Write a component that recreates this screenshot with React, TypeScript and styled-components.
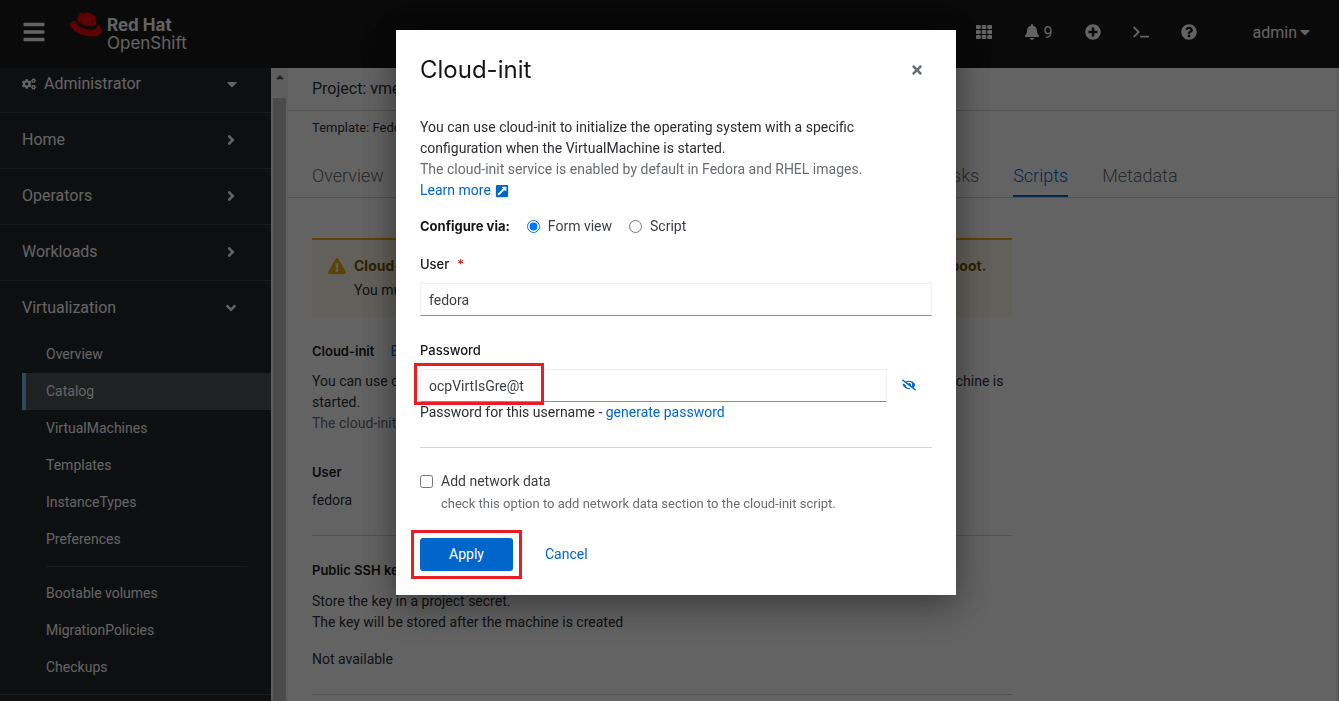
import React, { useState } from 'react';
import styled, { createGlobalStyle } from 'styled-components';
import {
  FaAngleDown,
  FaAngleRight,
  FaBars,
  FaBell,
  FaCaretDown,
  FaCaretUp,
  FaCogs,
  FaExclamationTriangle,
  FaExternalLinkSquareAlt,
  FaEyeSlash,
  FaPlusCircle,
  FaQuestionCircle,
  FaTh,
  FaTimes,
} from 'react-icons/fa';

const text = `Roboto, 'Liberation Sans', sans-serif`;
const display = `Inter, 'Liberation Sans', sans-serif`;

const GlobalStyle = createGlobalStyle`
  *, *::before, *::after { box-sizing: border-box; }
  body {
    margin: 0;
    background: #fff;
    color: #2b2d30;
    font-family: ${text};
    font-size: 14px;
    line-height: 21px;
  }
  button { font: inherit; color: inherit; background: none; border: 0; padding: 0; cursor: pointer; }
  a { color: #0066cc; text-decoration: none; }
  p, h1, h2 { margin: 0; }
  svg { display: block; flex: none; }
`;

const Shell = styled.div`
  display: flex;
  flex-direction: column;
  height: 100vh;
  overflow: hidden;
`;

/* Masthead */

const Masthead = styled.header`
  display: flex;
  align-items: center;
  flex: none;
  height: 68px;
  padding: 0 26px 4px 22px;
  background: #151515;
  color: #fff;
`;

const MenuButton = styled.button`
  margin-right: 24px;
  font-size: 24px;
`;

const Brand = styled.a`
  display: flex;
  gap: 5px;
  color: #fff;
  font-family: ${display};
  font-size: 17px;
  line-height: 18px;
`;

const BrandName = styled.span`
  display: flex;
  flex-direction: column;
  padding-top: 4px;
`;

const Tools = styled.div`
  display: flex;
  align-items: center;
  gap: 32px;
  margin-left: auto;
  font-size: 16px;
`;

const ToolButton = styled.button`
  display: flex;
  align-items: center;
  gap: 4px;
`;

const UserMenu = styled(ToolButton)`
  gap: 0;
  margin-left: 24px;
`;

/* Sidebar */

const Body = styled.div`
  display: flex;
  flex: 1;
  min-height: 0;
`;

const Sidebar = styled.nav`
  flex: none;
  width: 271px;
  overflow: hidden;
  background: #212427;
  color: #fff;
`;

const NavSection = styled.div`
  border-bottom: 1px solid #3c3f42;
`;

const NavHeading = styled.button`
  display: flex;
  align-items: center;
  width: 100%;
  height: 55px;
  padding: 0 32px 2px 22px;
  font-size: 16px;
`;

const PerspectiveButton = styled(NavHeading)`
  gap: 8px;
  height: 44px;
  padding: 0 31px 13px 22px;
`;

const NavLabel = styled.span`
  flex: 1;
  text-align: left;
`;

const SubList = styled.ul`
  margin: 0;
  padding: 0 0 8px 22px;
  list-style: none;
`;

const SubLink = styled.a<{ $current?: boolean }>`
  display: flex;
  align-items: center;
  height: 37px;
  padding-left: 20px;
  border-left: 4px solid ${(p) => (p.$current ? '#73bcf7' : 'transparent')};
  background: ${(p) => (p.$current ? '#4f5255' : 'transparent')};
  color: #fff;
`;

const SubDivider = styled.li`
  height: 1px;
  margin: 8px 24px;
  background: #3c3f42;
`;

const ScrollTrack = styled.div`
  display: flex;
  flex-direction: column;
  align-items: center;
  flex: none;
  width: 17px;
  background: #f1f1f1;
  color: #505050;
`;

const ScrollArrow = styled.div`
  display: flex;
  align-items: center;
  height: 30px;
  padding-bottom: 12px;
  font-size: 12px;
`;

const ScrollThumb = styled.div`
  flex: 1;
  width: 13px;
  background: #c1c1c1;
`;

/* Page */

const Page = styled.main`
  flex: 1;
  min-width: 0;
  overflow: hidden;
  background: #fff;
`;

const PageEdge = styled.div`
  flex: none;
  width: 3px;
  padding: 102px 0 0 2px;
  background: #f1f1f1;
`;

const PageEdgeThumb = styled.div`
  height: 100%;
  background: #c1c1c1;
`;

const ProjectBar = styled.div`
  display: flex;
  align-items: center;
  height: 43px;
  padding: 0 24px 2px;
  border-bottom: 1px solid #d2d2d2;
  font-size: 16px;
`;

const TemplateLine = styled.div`
  padding: 6px 24px 17px;
  font-size: 13px;
`;

const Tabs = styled.div`
  display: flex;
  gap: 34px;
  padding: 0 24px;
  border-bottom: 1px solid #d2d2d2;
`;

const Tab = styled.button<{ $active?: boolean }>`
  height: 42px;
  border-bottom: 2px solid ${(p) => (p.$active ? '#0066cc' : 'transparent')};
  color: ${(p) => (p.$active ? '#0066cc' : '#6a6d70')};
  font-size: 18px;
  font-weight: 300;
  white-space: nowrap;
`;

const Content = styled.div`
  max-width: 748px;
  padding: 40px 24px;
`;

const Alert = styled.section`
  display: flex;
  gap: 8px;
  height: 79px;
  margin-bottom: 24px;
  padding: 15px 16px;
  border-top: 2px solid #f0ab00;
  background: #fdf7e7;
  white-space: nowrap;
`;

const AlertIcon = styled.span`
  padding-top: 2px;
  color: #f0ab00;
  font-size: 18px;
`;

const AlertTitle = styled.h2`
  margin-bottom: 4px;
  color: #795600;
  font-family: ${display};
  font-size: 14px;
  line-height: 21px;
`;

const Block = styled.section<{ $ruled?: boolean; $space: number }>`
  padding-bottom: ${(p) => p.$space}px;
  border-bottom: ${(p) => (p.$ruled ? '1px solid #d2d2d2' : '0')};
`;

const Term = styled.div<{ $gap: number }>`
  display: flex;
  gap: 16px;
  margin-bottom: ${(p) => p.$gap}px;
`;

const Strong = styled.strong<{ $bold?: boolean }>`
  color: #151515;
  font-family: ${display};
  font-size: 13px;
  font-weight: ${(p) => (p.$bold ? 700 : 600)};
`;

const Muted = styled.p`
  color: #6a6d70;
`;

const SshSection = styled(Block)`
  padding-top: 24px;
`;

const Spaced = styled.p`
  margin-top: 16px;
`;

/* Dialog */

const Backdrop = styled.div`
  position: fixed;
  inset: 0;
  display: flex;
  align-items: flex-start;
  justify-content: center;
  padding: 30px 0 0 13px;
  background: rgba(3, 3, 3, 0.62);
`;

const Dialog = styled.form`
  width: 560px;
  padding: 24px;
  background: #fff;
  box-shadow: 0 16px 32px rgba(3, 3, 3, 0.24), 0 0 32px rgba(3, 3, 3, 0.24);
`;

const DialogHeader = styled.div`
  display: flex;
  align-items: center;
  justify-content: space-between;
  height: 32px;
  margin-bottom: 31px;
  padding-right: 8px;
`;

const DialogTitle = styled.h1`
  color: #151515;
  font-family: ${display};
  font-size: 24px;
  font-weight: 400;
  line-height: 32px;
`;

const CloseButton = styled.button`
  color: #6a6d70;
  font-size: 14px;
`;

const IconLink = styled.a`
  display: inline-flex;
  align-items: center;
  gap: 4px;
`;

const Choices = styled.div`
  display: flex;
  align-items: center;
  gap: 17px;
  margin: 15px 0 17px;
`;

const Choice = styled.label`
  display: flex;
  align-items: center;
  gap: 8px;
  color: #3c3f42;
`;

const Tick = styled.input`
  flex: none;
  width: 13px;
  height: 13px;
  margin: 0;
`;

const FieldHead = styled.div`
  display: flex;
  gap: 8px;
  margin-bottom: 8px;
  font-family: ${display};
  font-size: 13px;
  font-weight: 500;
`;

const FieldLabel = styled.label`
  color: #151515;
`;

const Required = styled.span`
  color: #c9190b;
`;

const Field = styled.div`
  margin-bottom: 24px;
`;

const TextInput = styled.input`
  display: block;
  flex: 1;
  width: 100%;
  min-width: 0;
  height: 33px;
  padding: 0 8px;
  border: 1px solid #f0f0f0;
  border-bottom-color: #8a8d90;
  outline: 0;
  background: #fff;
  color: #3c3f42;
  font: inherit;
`;

const InputRow = styled.div`
  position: relative;
  display: flex;
`;

const RevealButton = styled.button`
  display: grid;
  place-items: center;
  width: 45px;
  padding: 0 2px 2px 0;
  color: #0066cc;
`;

const TextButton = styled.button`
  color: #0066cc;
`;

const Rule = styled.hr`
  height: 1px;
  margin: 0 0 23px;
  border: 0;
  background: #d2d2d2;
`;

const CheckDescription = styled.p`
  margin: 1px 0 24px;
  padding-left: 21px;
  color: #6a6d70;
  font-size: 13px;
`;

const Actions = styled.div`
  display: flex;
  gap: 32px;
`;

const ApplyWrap = styled.div`
  position: relative;
`;

const ApplyButton = styled.button`
  width: 93px;
  height: 33px;
  border-radius: 3px;
  background: #0066cc;
  color: #fff;
`;

const Callout = styled.div<{ $inset: string; $width?: number }>`
  position: absolute;
  inset: ${(p) => p.$inset};
  width: ${(p) => (p.$width ? p.$width + 'px' : 'auto')};
  border: 3px solid #ed1c24;
  pointer-events: none;
`;

const HatLogo = () => (
  <svg width="32" height="25" viewBox="0 2.9 24 18.3" aria-hidden="true">
    <path
      fill="#ee0000"
      d="M16.009 13.386c1.577 0 3.86-.326 3.86-2.202a1.765 1.765 0 0 0-.04-.431l-.94-4.08c-.216-.898-.406-1.305-1.982-2.093-1.223-.625-3.888-1.658-4.676-1.658-.733 0-.947.946-1.822.946-.842 0-1.467-.706-2.255-.706-.757 0-1.25.515-1.63 1.576 0 0-1.06 2.99-1.197 3.424a.81.81 0 0 0-.028.245c0 1.162 4.577 4.974 10.71 4.974m4.101-1.435c.218 1.032.218 1.14.218 1.277 0 1.765-1.984 2.745-4.593 2.745-5.895.004-11.06-3.451-11.06-5.734a2.326 2.326 0 0 1 .19-.925C2.746 9.415 0 9.794 0 12.217c0 3.969 9.405 8.861 16.851 8.861 5.71 0 7.149-2.582 7.149-4.62 0-1.605-1.387-3.425-3.887-4.512"
    />
  </svg>
);

const PromptIcon = () => (
  <svg width="16" height="16" viewBox="0 0 16 16" fill="none" stroke="currentColor" strokeWidth="1.8" aria-hidden="true">
    <path d="M.7 3l5 5-5 5M7 12.6h9" />
  </svg>
);

const sections = ['Home', 'Operators', 'Workloads'];
const mainLinks = ['Overview', 'Catalog', 'VirtualMachines', 'Templates', 'InstanceTypes', 'Preferences'];
const moreLinks = ['Bootable volumes', 'MigrationPolicies', 'Checkups'];
const tabs = ['Overview', 'YAML', 'Scheduling', 'Environment', 'Network interfaces', 'Disks', 'Scripts', 'Metadata'];

export default function App() {
  const [user, setUser] = useState('fedora');
  const [password, setPassword] = useState('ocpVirtIsGre@t');
  const [view, setView] = useState('form');

  return (
    <>
      <GlobalStyle />
      <Shell>
        <Masthead>
          <MenuButton aria-label="Toggle navigation"><FaBars /></MenuButton>
          <Brand href="#home">
            <HatLogo />
            <BrandName>
              <b>Red Hat</b>
              <span>OpenShift</span>
            </BrandName>
          </Brand>
          <Tools>
            <ToolButton aria-label="Applications"><FaTh /></ToolButton>
            <ToolButton aria-label="Notifications"><FaBell />9</ToolButton>
            <ToolButton aria-label="Create"><FaPlusCircle /></ToolButton>
            <ToolButton aria-label="Terminal"><PromptIcon /></ToolButton>
            <ToolButton aria-label="Help"><FaQuestionCircle /></ToolButton>
            <UserMenu>admin<FaCaretDown /></UserMenu>
          </Tools>
        </Masthead>

        <Body>
          <Sidebar aria-label="Main">
            <NavSection>
              <PerspectiveButton>
                <FaCogs size={14} />
                <NavLabel>Administrator</NavLabel>
                <FaCaretDown />
              </PerspectiveButton>
            </NavSection>
            {sections.map((name) => (
              <NavSection key={name}>
                <NavHeading>
                  <NavLabel>{name}</NavLabel>
                  <FaAngleRight />
                </NavHeading>
              </NavSection>
            ))}
            <NavSection>
              <NavHeading>
                <NavLabel>Virtualization</NavLabel>
                <FaAngleDown />
              </NavHeading>
              <SubList>
                {mainLinks.map((name) => (
                  <li key={name}><SubLink href="#nav" $current={name === 'Catalog'}>{name}</SubLink></li>
                ))}
                <SubDivider role="separator" />
                {moreLinks.map((name) => (
                  <li key={name}><SubLink href="#nav">{name}</SubLink></li>
                ))}
              </SubList>
            </NavSection>
          </Sidebar>
          <ScrollTrack>
            <ScrollArrow><FaCaretUp /></ScrollArrow>
            <ScrollThumb />
          </ScrollTrack>

          <Page>
            <ProjectBar>Project: vmexamples</ProjectBar>
            <TemplateLine>Template: Fedora VM</TemplateLine>
            <Tabs>
              {tabs.map((name) => (
                <Tab key={name} $active={name === 'Scripts'}>{name}</Tab>
              ))}
            </Tabs>
            <Content>
              <Alert>
                <AlertIcon><FaExclamationTriangle /></AlertIcon>
                <div>
                  <AlertTitle>
                    Cloud-init and SSH key configurations will be applied to the VirtualMachine only at first boot.
                  </AlertTitle>
                  <p>You must ensure that the configuration is correct before starting.</p>
                </div>
              </Alert>
              <Block $space={28}>
                <Term $gap={9}><Strong>Cloud-init</Strong><a href="#edit">Edit</a></Term>
                <p>
                  You can use cloud-init to initialize the operating system with a specific configuration when the
                  VirtualMachine is started.
                </p>
                <Muted>The cloud-init service is enabled by default in Fedora and RHEL images.</Muted>
              </Block>
              <Block $space={24} $ruled>
                <Term $gap={7}><Strong>User</Strong></Term>
                <p>fedora</p>
              </Block>
              <SshSection $space={24} $ruled>
                <Term $gap={10}><Strong>Public SSH key</Strong></Term>
                <p>Store the key in a project secret.</p>
                <p>The key will be stored after the machine is created</p>
                <Spaced>Not available</Spaced>
              </SshSection>
            </Content>
          </Page>
          <PageEdge><PageEdgeThumb /></PageEdge>
        </Body>
      </Shell>

      <Backdrop>
        <Dialog role="dialog" aria-modal="true" aria-labelledby="dialog-title" onSubmit={(e) => e.preventDefault()}>
          <DialogHeader>
            <DialogTitle id="dialog-title">Cloud-init</DialogTitle>
            <CloseButton type="button" aria-label="Close"><FaTimes /></CloseButton>
          </DialogHeader>
          <p>
            You can use cloud-init to initialize the operating system with a specific configuration when the
            VirtualMachine is started.
          </p>
          <Muted>The cloud-init service is enabled by default in Fedora and RHEL images.</Muted>
          <IconLink href="#learn">Learn more<FaExternalLinkSquareAlt /></IconLink>

          <Choices role="radiogroup" aria-labelledby="configure-via">
            <Strong id="configure-via" $bold>Configure via:</Strong>
            <Choice>
              <Tick type="radio" name="view" checked={view === 'form'} onChange={() => setView('form')} />
              Form view
            </Choice>
            <Choice>
              <Tick type="radio" name="view" checked={view === 'script'} onChange={() => setView('script')} />
              Script
            </Choice>
          </Choices>

          <Field>
            <FieldHead>
              <FieldLabel htmlFor="user">User</FieldLabel>
              <Required>*</Required>
            </FieldHead>
            <TextInput id="user" required value={user} onChange={(e) => setUser(e.target.value)} />
          </Field>

          <Field>
            <FieldHead>
              <FieldLabel htmlFor="password">Password</FieldLabel>
            </FieldHead>
            <InputRow>
              <TextInput id="password" value={password} onChange={(e) => setPassword(e.target.value)} />
              <RevealButton type="button" aria-label="Hide password"><FaEyeSlash /></RevealButton>
              <Callout $inset="-6px auto -3px -6px" $width={130} />
            </InputRow>
            <p>Password for this username - <TextButton type="button">generate password</TextButton></p>
          </Field>

          <Rule />
          <Choice>
            <Tick type="checkbox" />
            Add network data
          </Choice>
          <CheckDescription>check this option to add network data section to the cloud-init script.</CheckDescription>

          <Actions>
            <ApplyWrap>
              <ApplyButton type="submit">Apply</ApplyButton>
              <Callout $inset="-8px -9px" />
            </ApplyWrap>
            <TextButton type="button">Cancel</TextButton>
          </Actions>
        </Dialog>
      </Backdrop>
    </>
  );
}
